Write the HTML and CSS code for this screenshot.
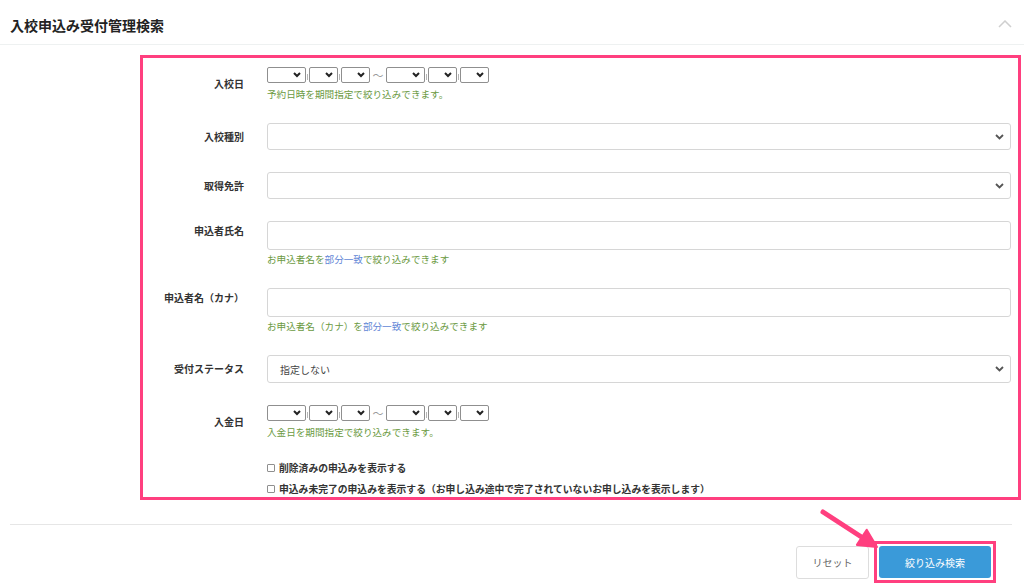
FILE: index.html
```html
<!DOCTYPE html>
<html lang="ja">
<head>
<meta charset="utf-8">
<title>入校申込み受付管理検索</title>
<link rel="stylesheet" href="styles.css">
</head>
<body>
<header class="panel-head">
  <h1 class="panel-title">入校申込み受付管理検索</h1>
  <svg class="collapse-icon" width="14" height="8" viewBox="0 0 14 8"><path d="M1 7 L7 1 L13 7" fill="none" stroke="#cfcfcf" stroke-width="1.5"/></svg>
</header>

<main class="panel-body">
  <section class="filter-box">
    <div class="row">
      <div class="label">入校日</div>
      <div class="control">
        <div class="date-range">
          <span class="mini w-y"><svg width="8" height="6" viewBox="0 0 8 6"><path d="M1 1 L4 4 L7 1" fill="none" stroke="#222" stroke-width="2"/></svg></span><span class="sep"></span><span class="mini w-m"><svg width="8" height="6" viewBox="0 0 8 6"><path d="M1 1 L4 4 L7 1" fill="none" stroke="#222" stroke-width="2"/></svg></span><span class="sep"></span><span class="mini w-m"><svg width="8" height="6" viewBox="0 0 8 6"><path d="M1 1 L4 4 L7 1" fill="none" stroke="#222" stroke-width="2"/></svg></span><span class="tilde">～</span><span class="mini w-y"><svg width="8" height="6" viewBox="0 0 8 6"><path d="M1 1 L4 4 L7 1" fill="none" stroke="#222" stroke-width="2"/></svg></span><span class="sep"></span><span class="mini w-m"><svg width="8" height="6" viewBox="0 0 8 6"><path d="M1 1 L4 4 L7 1" fill="none" stroke="#222" stroke-width="2"/></svg></span><span class="sep"></span><span class="mini w-m"><svg width="8" height="6" viewBox="0 0 8 6"><path d="M1 1 L4 4 L7 1" fill="none" stroke="#222" stroke-width="2"/></svg></span>
        </div>
        <p class="hint date-hint">予約日時を期間指定で絞り込みできます。</p>
      </div>
    </div>

    <div class="row">
      <div class="label">入校種別</div>
      <div class="control">
        <div class="select"><span></span><svg width="9" height="6" viewBox="0 0 9 6"><path d="M1 1 L4.5 4.5 L8 1" fill="none" stroke="#555" stroke-width="1.8"/></svg></div>
      </div>
    </div>

    <div class="row">
      <div class="label">取得免許</div>
      <div class="control">
        <div class="select"><span></span><svg width="9" height="6" viewBox="0 0 9 6"><path d="M1 1 L4.5 4.5 L8 1" fill="none" stroke="#555" stroke-width="1.8"/></svg></div>
      </div>
    </div>

    <div class="row">
      <div class="label label-top">申込者氏名</div>
      <div class="control">
        <div class="text-input"></div>
        <p class="hint">お申込者名を<span class="em">部分一致</span>で絞り込みできます</p>
      </div>
    </div>

    <div class="row">
      <div class="label label-top">申込者名（カナ）</div>
      <div class="control">
        <div class="text-input"></div>
        <p class="hint">お申込者名（カナ）を<span class="em">部分一致</span>で絞り込みできます</p>
      </div>
    </div>

    <div class="row">
      <div class="label">受付ステータス</div>
      <div class="control">
        <div class="select tall"><span class="select-text">指定しない</span><svg width="9" height="6" viewBox="0 0 9 6"><path d="M1 1 L4.5 4.5 L8 1" fill="none" stroke="#555" stroke-width="1.8"/></svg></div>
      </div>
    </div>

    <div class="row">
      <div class="label">入金日</div>
      <div class="control">
        <div class="date-range">
          <span class="mini w-y"><svg width="8" height="6" viewBox="0 0 8 6"><path d="M1 1 L4 4 L7 1" fill="none" stroke="#222" stroke-width="2"/></svg></span><span class="sep"></span><span class="mini w-m"><svg width="8" height="6" viewBox="0 0 8 6"><path d="M1 1 L4 4 L7 1" fill="none" stroke="#222" stroke-width="2"/></svg></span><span class="sep"></span><span class="mini w-m"><svg width="8" height="6" viewBox="0 0 8 6"><path d="M1 1 L4 4 L7 1" fill="none" stroke="#222" stroke-width="2"/></svg></span><span class="tilde">～</span><span class="mini w-y"><svg width="8" height="6" viewBox="0 0 8 6"><path d="M1 1 L4 4 L7 1" fill="none" stroke="#222" stroke-width="2"/></svg></span><span class="sep"></span><span class="mini w-m"><svg width="8" height="6" viewBox="0 0 8 6"><path d="M1 1 L4 4 L7 1" fill="none" stroke="#222" stroke-width="2"/></svg></span><span class="sep"></span><span class="mini w-m"><svg width="8" height="6" viewBox="0 0 8 6"><path d="M1 1 L4 4 L7 1" fill="none" stroke="#222" stroke-width="2"/></svg></span>
        </div>
        <p class="hint date-hint">入金日を期間指定で絞り込みできます。</p>
      </div>
    </div>

    <div class="checks">
      <label class="check"><span class="box"></span>削除済みの申込みを表示する</label>
      <label class="check second"><span class="box"></span>申込み未完了の申込みを表示する（お申し込み途中で完了されていないお申し込みを表示します）</label>
    </div>
  </section>

  <div class="divider"></div>

  <div class="actions">
    <button class="btn btn-reset">リセット</button>
    <div class="highlight"><button class="btn btn-search">絞り込み検索</button></div>
  </div>
</main>

<svg class="callout-arrow" width="70" height="50" viewBox="0 0 70 50">
  <path d="M8 7 L48 33" stroke="#ff3f7f" stroke-width="5" stroke-linecap="round"/>
  <polygon points="62,42 41.9,39.9 51.7,24.7" fill="#ff3f7f" stroke="#ff3f7f" stroke-width="2" stroke-linejoin="round"/>
</svg>
</body>
</html>
```

FILE: styles.css
```css
* { box-sizing: border-box; }

body {
  margin: 0;
  width: 1024px;
  height: 587px;
  overflow: hidden;
  background: #ffffff;
  font-family: "Noto Sans CJK JP", "Noto Sans", sans-serif;
  color: #333333;
  position: relative;
}

.panel-head {
  height: 45px;
  display: flex;
  align-items: center;
  justify-content: space-between;
  padding: 5px 12px 0 10px;
  border-bottom: 1px solid #eef1f1;
}

.panel-title {
  margin: 0;
  font-size: 14px;
  font-weight: 700;
  color: #222222;
  line-height: 20px;
}

.collapse-icon { display: block; margin-top: -2px; }

.panel-body { padding: 0; }

.filter-box {
  margin: 10px 3px 0 140px;
  border: 3px solid #ff3f7f;
  padding: 9px 7px 1px 0;
  display: flex;
  flex-direction: column;
  gap: 22px;
}

.row {
  display: grid;
  grid-template-columns: 101px 1fr;
  column-gap: 23px;
  align-items: center;
}

.label {
  text-align: right;
  font-size: 10px;
  font-weight: 700;
  line-height: 14px;
  color: #333333;
  white-space: nowrap;
}

.label-top { align-self: start; padding-top: 3px; }

.control { min-width: 0; }

.date-range {
  display: flex;
  align-items: center;
  height: 16px;
}

.mini {
  height: 16px;
  border: 1px solid #8f8f8f;
  border-radius: 2px;
  background: #fff;
  display: flex;
  align-items: center;
  justify-content: flex-end;
  padding-right: 4px;
}
.mini svg { display: block; }
.w-y { width: 39px; }
.w-m { width: 29px; }

.sep {
  width: 3px;
  height: 16px;
  position: relative;
}
.sep::after {
  content: "";
  position: absolute;
  left: 1px;
  top: 7px;
  width: 1px;
  height: 6px;
  background: #b5b5b5;
}

.tilde {
  width: 16px;
  text-align: center;
  font-size: 11px;
  line-height: 16px;
  color: #999999;
}

.hint {
  margin: 2px 0 0;
  font-size: 9.6px;
  line-height: 14px;
  color: #6b9a3f;
  white-space: nowrap;
}
.date-hint { margin-top: 4px; }
.em { color: #6185d6; }

.select {
  height: 27px;
  border: 1px solid #d6d6d6;
  border-radius: 3px;
  background: #fff;
  display: flex;
  align-items: center;
  justify-content: space-between;
  padding: 0 6px 0 12px;
}
.select svg { display: block; }
.select.tall { height: 28px; }
.select-text {
  font-size: 10px;
  color: #444444;
}

.text-input {
  height: 29px;
  border: 1px solid #d6d6d6;
  border-radius: 3px;
  background: #fff;
}

.checks {
  padding-left: 124px;
  display: flex;
  flex-direction: column;
  gap: 7px;
}

.check {
  display: flex;
  align-items: center;
  font-size: 9.8px;
  font-weight: 700;
  line-height: 14px;
  color: #333333;
  white-space: nowrap;
}
.check .box {
  width: 8px;
  height: 8px;
  border: 1px solid #8f8f8f;
  border-radius: 1px;
  margin-right: 4px;
  background: #fff;
  flex: none;
}

.divider {
  margin: 24px 12px 0 10px;
  border-top: 1px solid #e6e6e6;
}

.actions {
  display: flex;
  justify-content: flex-end;
  align-items: center;
  gap: 5px;
  margin-top: 16px;
  padding-right: 28px;
}

.btn {
  font-family: "Noto Sans CJK JP", "Noto Sans", sans-serif;
  font-size: 10px;
  border-radius: 3px;
  cursor: pointer;
}

.btn-reset {
  width: 73px;
  height: 33px;
  border: 1px solid #dddddd;
  background: #ffffff;
  color: #666666;
}

.highlight {
  border: 3px solid #ff3f7f;
  padding: 2px;
}

.btn-search {
  display: block;
  width: 112px;
  height: 32px;
  border: none;
  background: #3a9ad9;
  color: #ffffff;
}

.callout-arrow {
  position: absolute;
  left: 815px;
  top: 505px;
}
```
